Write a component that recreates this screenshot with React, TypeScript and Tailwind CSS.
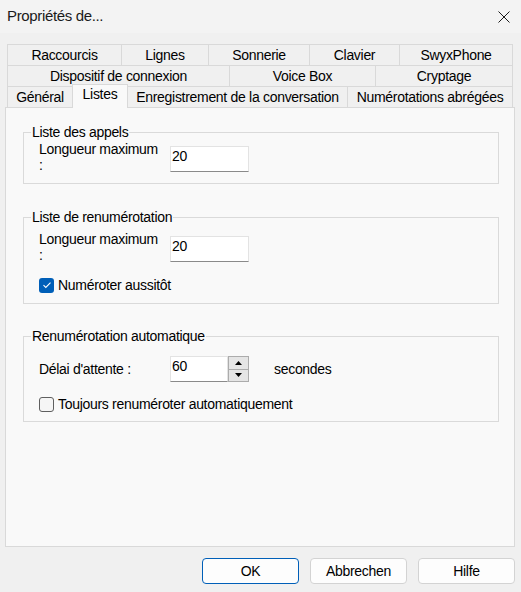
import React from 'react';

type Tab = { label: string; cls: string };

// Three stacked rows of tabs; the bottom row holds the active one.
const upperRows: Tab[][] = [
  [
    { label: 'Raccourcis', cls: 'w-[114px]' },
    { label: 'Lignes', cls: 'w-[87px]' },
    { label: 'Sonnerie', cls: 'w-[101px]' },
    { label: 'Clavier', cls: 'w-[90px]' },
    { label: 'SwyxPhone', cls: 'w-[114px] border-r' },
  ],
  [
    { label: 'Dispositif de connexion', cls: 'w-[222px]' },
    { label: 'Voice Box', cls: 'w-[146px]' },
    { label: 'Cryptage', cls: 'w-[138px] border-r' },
  ],
];

function TabCell({ tab }: { tab: Tab }) {
  return (
    <div
      className={`flex h-[21px] items-center justify-center border-t border-l border-[#d9d9d9] bg-[#f0f0f0] leading-[16px] ${tab.cls}`}
    >
      {tab.label}
    </div>
  );
}

function TextBox({ value, width }: { value: string; width: string }) {
  return (
    <div
      className={`h-[26px] ${width} border border-[#e3e3e3] border-b-[#8a8a8a] bg-white pl-[1px] pt-[1px] leading-[16px] text-black`}
    >
      {value}
    </div>
  );
}

function Spinner() {
  return (
    <div className="flex h-[26px] w-[21px] flex-col border border-[#acacac] bg-[#f0f0f0]">
      <div className="flex flex-1 items-center justify-center border-b border-[#acacac] bg-[#e5e5e5]">
        <svg width="7" height="4" viewBox="0 0 7 4">
          <path d="M0 4 L3.5 0 L7 4 Z" fill="#000" />
        </svg>
      </div>
      <div className="flex flex-1 items-center justify-center bg-[#e5e5e5]">
        <svg width="7" height="4" viewBox="0 0 7 4">
          <path d="M0 0 L3.5 4 L7 0 Z" fill="#000" />
        </svg>
      </div>
    </div>
  );
}

function CheckBox({ checked, label }: { checked: boolean; label: string }) {
  return (
    <div className="flex h-[16px] items-center gap-[4px] leading-[16px]">
      {checked ? (
        <div className="flex h-[15px] w-[15px] items-center justify-center rounded-[3px] bg-[#005fb8]">
          <svg width="10" height="8" viewBox="0 0 10 8">
            <path d="M1.5 4.2 L3.8 6.4 L8.5 1.6" fill="none" stroke="#fff" strokeWidth="1.1" />
          </svg>
        </div>
      ) : (
        <div className="h-[15px] w-[15px] rounded-[3px] border border-[#5f5f5f] bg-[#f5f5f5]" />
      )}
      <span>{label}</span>
    </div>
  );
}

function Group({ title, className, children }: { title: string; className?: string; children: React.ReactNode }) {
  return (
    <fieldset className={`w-[476px] border border-[#dadada] ${className ?? ''}`}>
      <legend className="ml-[7px] px-[1px] leading-[16px]">{title}</legend>
      {children}
    </fieldset>
  );
}

function DialogButton({ label, primary }: { label: string; primary?: boolean }) {
  return (
    <button
      type="button"
      className={`h-[26px] w-[97px] rounded-[4px] border bg-[#fdfdfd] leading-[16px] text-black ${
        primary ? 'border-[#005fb8]' : 'border-[#d3d3d3]'
      }`}
    >
      {label}
    </button>
  );
}

export default function App() {
  return (
    <div className="flex h-[592px] w-[521px] flex-col bg-[#f0f0f0] [font-family:'Liberation_Sans',Arial,sans-serif] text-[14px] tracking-[-0.3px] text-black">
      {/* Title bar */}
      <div className="flex h-[33px] items-center justify-between bg-[#f3f3f3] pl-[7px] pr-[11px]">
        <span className="text-[15px] tracking-[-0.35px] text-[#1a1a1a]">Propriétés de...</span>
        <svg width="12" height="12" viewBox="0 0 12 12">
          <path d="M0.5 0.5 L11.5 11.5 M11.5 0.5 L0.5 11.5" stroke="#1a1a1a" strokeWidth="1" />
        </svg>
      </div>

      {/* Tabs */}
      <div className="mt-[11px] flex flex-col pl-[7px]">
        {upperRows.map((row, i) => (
          <div key={i} className="flex">
            {row.map((t) => (
              <TabCell key={t.label} tab={t} />
            ))}
          </div>
        ))}
        <div className="flex h-[21px] items-start">
          <TabCell tab={{ label: 'Général', cls: 'w-[65px]' }} />
          <div className="relative z-10 -mt-[2px] flex h-[24px] w-[56px] justify-center border-x border-t border-[#d9d9d9] bg-[#f9f9f9] pt-[1px] leading-[16px]">
            Listes
          </div>
          <TabCell tab={{ label: 'Enregistrement de la conversation', cls: 'w-[219px] !border-l-0' }} />
          <TabCell tab={{ label: 'Numérotations abrégées', cls: 'w-[166px] border-r' }} />
        </div>
      </div>

      {/* Page */}
      <div className="ml-[5px] flex w-[510px] flex-1 flex-col border border-[#d9d9d9] bg-[#f9f9f9] pl-[17px] pt-[16px]">
        <Group title="Liste des appels">
          <div className="flex items-start pb-[10px] pl-[15px]">
            <div className="mt-[1px] w-[122px] leading-[16px]">Longueur maximum :</div>
            <div className="ml-[9px] mt-[6px]">
              <TextBox value="20" width="w-[79px]" />
            </div>
          </div>
        </Group>

        <Group title="Liste de renumérotation" className="mt-[25px]">
          <div className="flex flex-col pb-[10px] pl-[15px]">
            <div className="flex items-start">
              <div className="mt-[6px] w-[122px] leading-[16px]">Longueur maximum :</div>
              <div className="ml-[9px] mt-[11px]">
                <TextBox value="20" width="w-[79px]" />
              </div>
            </div>
            <div className="mt-[14px]">
              <CheckBox checked label="Numéroter aussitôt" />
            </div>
          </div>
        </Group>

        <Group title="Renumérotation automatique" className="mt-[24px]">
          <div className="flex flex-col pb-[9px] pl-[15px]">
            <div className="mt-[12px] flex h-[26px] items-center">
              <div className="w-[131px] leading-[16px]">Délai d'attente :</div>
              <TextBox value="60" width="w-[58px]" />
              <Spinner />
              <span className="ml-[25px] leading-[16px]">secondes</span>
            </div>
            <div className="mt-[14px]">
              <CheckBox checked={false} label="Toujours renuméroter automatiquement" />
            </div>
          </div>
        </Group>
      </div>

      {/* Buttons */}
      <div className="mb-[8px] mt-[11px] flex justify-end gap-[11px] pr-[6px]">
        <DialogButton label="OK" primary />
        <DialogButton label="Abbrechen" />
        <DialogButton label="Hilfe" />
      </div>
    </div>
  );
}
